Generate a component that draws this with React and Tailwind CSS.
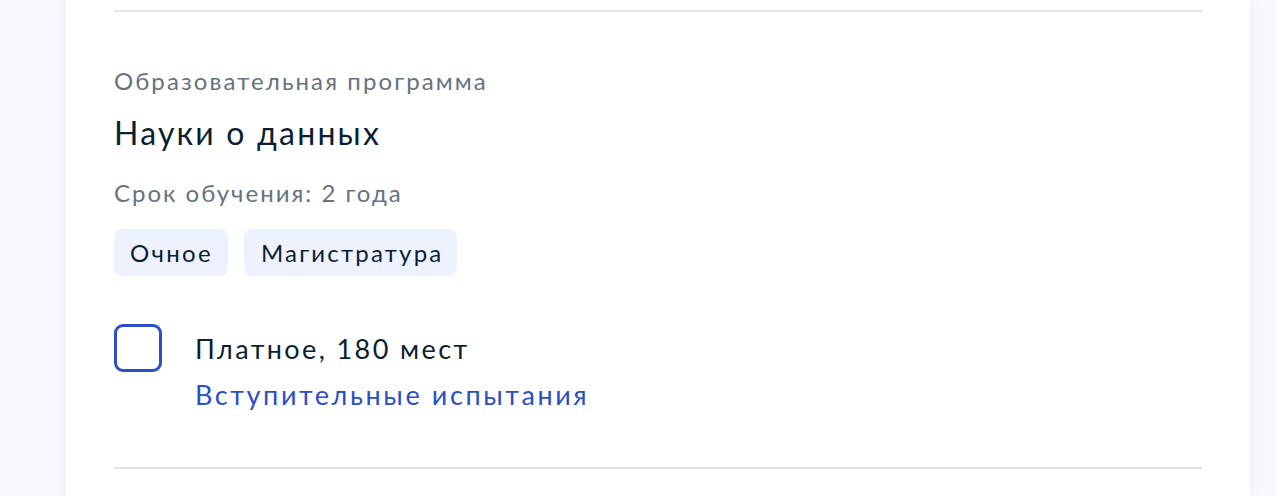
export default function App() {
  return (
    <div className="w-[1276px] h-[496px] bg-[#f6f8fd] overflow-hidden" style={{ fontFamily: 'Lato, "Noto Sans", sans-serif' }}>
      <div className="ml-[66px] w-[1184px] h-[496px] bg-white shadow-[0_0_14px_rgba(80,110,170,0.08)] px-[48px]">
        <div className="h-[10px]" />
        <div className="h-[2px] bg-[#e3e4e8]" />
        <div className="pt-[54px]">
          <div className="text-[24px] leading-[30px] tracking-[2.1px] text-[#66727f]">Образовательная программа</div>
          <div className="mt-[18px] text-[32px] leading-[38px] tracking-[2.2px] text-[#0b1f33]">Науки о данных</div>
          <div className="mt-[26px] text-[24px] leading-[30px] tracking-[2px] text-[#66727f]">Срок обучения: 2 года</div>
          <div className="mt-[21px] flex gap-[16px]">
            <div className="h-[47px] pl-[16px] pr-[15px] rounded-[8px] bg-[#edf2fe] flex items-center text-[24px] leading-[30px] tracking-[2.3px] text-[#0b1f33]">Очное</div>
            <div className="h-[47px] pl-[17px] pr-[14px] rounded-[8px] bg-[#edf2fe] flex items-center text-[24px] leading-[30px] tracking-[2.2px] text-[#0b1f33]">Магистратура</div>
          </div>
          <div className="mt-[48px] flex gap-[33px]">
            <div className="w-[48px] h-[48px] rounded-[9px] border-[3px] border-[#2a4fc6] shrink-0" />
            <div>
              <div className="pt-[8px] text-[27px] leading-[34px] tracking-[2.4px] text-[#0b1f33]">Платное, 180 мест</div>
              <div className="mt-[12px] text-[27px] leading-[34px] tracking-[2.6px] text-[#2a4fc6]">Вступительные испытания</div>
            </div>
          </div>
        </div>
        <div className="mt-[55px] h-[2px] bg-[#e3e4e8]" />
      </div>
    </div>
  );
}
